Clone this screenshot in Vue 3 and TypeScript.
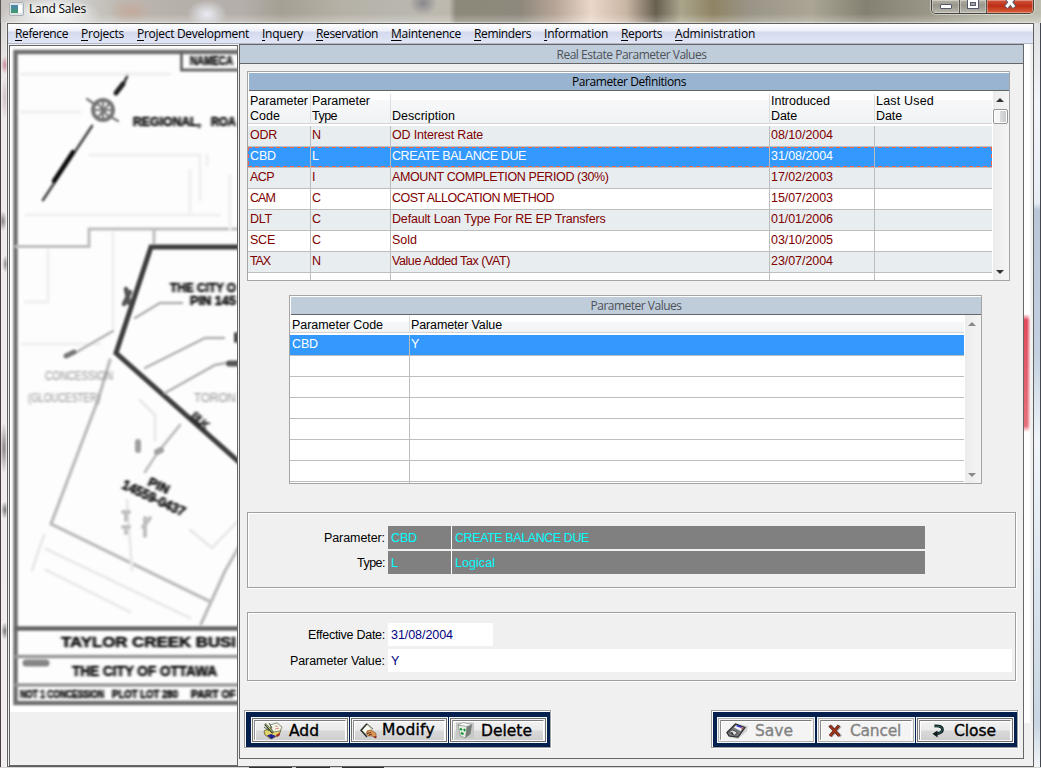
<script setup lang="ts">
interface MenuItem { label: string; width: number }
interface Txt { text: string; width: number }
interface DefRow { cells: (Txt | null)[]; selected?: boolean }
interface ToolButton { label: string; width: number; icon: string; cls: string; disabled?: boolean }

const fit = (el: HTMLElement, width: number) => {
  el.style.letterSpacing = '0px'
  const natural = el.getBoundingClientRect().width
  const n = (el.textContent ?? '').trim().length
  if (n > 0 && width > 0) el.style.letterSpacing = `${(width - natural) / n}px`
}
const vFit = {
  mounted(el: HTMLElement, b: { value: number }) {
    fit(el, b.value)
  },
}

const menu: MenuItem[] = [
  { label: 'Reference', width: 53 },
  { label: 'Projects', width: 43 },
  { label: 'Project Development', width: 112 },
  { label: 'Inquery', width: 41 },
  { label: 'Reservation', width: 62 },
  { label: 'Maintenence', width: 70 },
  { label: 'Reminders', width: 57 },
  { label: 'Information', width: 64 },
  { label: 'Reports', width: 41 },
  { label: 'Administration', width: 80 },
]

const t = (text: string, width: number): Txt => ({ text, width })
const defRows: DefRow[] = [
  { cells: [t('ODR', 27), t('N', 9), t('OD Interest Rate', 91), t('08/10/2004', 62), null] },
  { cells: [t('CBD', 26), t('L', 7), t('CREATE BALANCE DUE', 134), t('31/08/2004', 62), null], selected: true },
  { cells: [t('ACP', 24), t('I', 4), t('AMOUNT COMPLETION PERIOD (30%)', 216.5), t('17/02/2003', 62), null] },
  { cells: [t('CAM', 25), t('C', 9), t('COST ALLOCATION METHOD', 162), t('15/07/2003', 62), null] },
  { cells: [t('DLT', 22), t('C', 9), t('Default Loan Type For RE EP Transfers', 213.5), t('01/01/2006', 62), null] },
  { cells: [t('SCE', 25), t('C', 9), t('Sold', 25), t('03/10/2005', 62), null] },
  { cells: [t('TAX', 20), t('N', 9), t('Value Added Tax (VAT)', 118), t('23/07/2004', 62), null] },
  { cells: [null, null, null, null, null] },
]

const leftTools: ToolButton[] = [
  { label: 'Add', width: 30, icon: 'add', cls: 'b-add' },
  { label: 'Modify', width: 53, icon: 'modify', cls: 'b-modify' },
  { label: 'Delete', width: 51, icon: 'delete', cls: 'b-delete' },
]
const rightTools: ToolButton[] = [
  { label: 'Save', width: 38, icon: 'save', cls: 'b-save', disabled: true },
  { label: 'Cancel', width: 51, icon: 'cancel', cls: 'b-cancel', disabled: true },
  { label: 'Close', width: 42, icon: 'close', cls: 'b-close' },
]
const toolbars = [
  { side: 'left', items: leftTools },
  { side: 'right', items: rightTools },
]
</script>

<template>
  <div class="frame">
    <header class="titlebar">
      <svg class="app-icon" width="15" height="14" viewBox="0 0 15 14">
        <defs>
          <linearGradient id="ai" x1="0" y1="0" x2="0" y2="1">
            <stop offset="0" stop-color="#4a86b0" /><stop offset="1" stop-color="#3f9a6a" />
          </linearGradient>
        </defs>
        <rect x="0.5" y="0.5" width="14" height="13" rx="1" fill="#dfe3e6" stroke="#a9afb3" />
        <rect x="2" y="3" width="7" height="8" fill="url(#ai)" />
        <rect x="9" y="3" width="4" height="8" fill="#fff" />
      </svg>
      <span v-fit="57" class="app-title">Land Sales</span>
      <div class="winbtns">
        <span class="wb min"><svg width="14" height="6"><rect x="1.5" y="0.5" width="11" height="4" rx="0.5" fill="#fff" stroke="#555a6e" /></svg></span>
        <span class="wb max"><svg width="12" height="10"><rect x="0.5" y="-3" width="11" height="11.5" fill="#fff" stroke="#555a6e" /><rect x="3.5" y="2.5" width="5" height="3" fill="#a5a5a0" stroke="#555a6e" /></svg></span>
        <span class="wb cls"><svg width="13" height="10" viewBox="0 0 13 10"><path d="M2 -3 L10.500 7.500 M10.500 -3 L2 7.500" stroke="#5c5868" stroke-width="5" /><path d="M2.400 -2.500 L10.100 7 M10.100 -2.500 L2.400 7" stroke="#fff" stroke-width="3" /></svg></span>
      </div>
    </header>

    <div class="mid">
      <div class="edge left"></div>
      <div class="client">
        <nav class="menubar">
          <span v-for="m in menu" :key="m.label" v-fit="m.width" class="mi"><u>{{ m.label[0] }}</u>{{ m.label.slice(1) }}</span>
        </nav>
        <main class="mdi">
          <section class="plan">
            <svg width="227" height="719" viewBox="10 46 227 719">
              <defs>
                <filter id="soft" x="-5%" y="-5%" width="110%" height="110%"><feGaussianBlur stdDeviation="1.200" /></filter>
                <filter id="softer" x="-5%" y="-5%" width="110%" height="110%"><feGaussianBlur stdDeviation="1.550 1.250" /></filter>
              </defs>
              <rect x="10" y="46" width="227" height="666" fill="#fff" />
              <rect x="18" y="54" width="222" height="648" fill="#fdfdfd" />
              <g filter="url(#soft)" fill="none" stroke-linecap="round">
                <path d="M245 52 H15.5 V703 H245" stroke="#707070" stroke-width="4.500" />
                <path d="M181.500 52 V70 H245" stroke="#666" stroke-width="2.800" />
                <path d="M128 74 L124 83" stroke="#444" stroke-width="3" />
                <path d="M123 84 L116 93" stroke="#222" stroke-width="5" />
                <path d="M92 126 L43 200" stroke="#555" stroke-width="3" />
                <path d="M73 152 L54 181" stroke="#111" stroke-width="4.500" />
                <circle cx="103" cy="110" r="10" stroke="#777" stroke-width="4" />
                <path d="M93 110 H114 M103 100 V121 M87 99 L96 105 M111 117 L118 121 M98 104 L109 117 M109 104 L98 117" stroke="#777" stroke-width="2.200" />
                <path d="M16 246.500 H89 V229 H240 M154 229 V246" stroke="#bebebe" stroke-width="3" />
                <path d="M240 247 H151 L116 353 L240 463" stroke="#3c3c3c" stroke-width="5" />
                <path d="M48 250 V302 H25 M113 232 V328 M22 344 H100 M90 155 H200 V200 M190 170 V215 M230 175 V229 M207 155 V165 M20 74 H170 M20 112 H80 M26 215 H220" stroke="#f0f0f0" stroke-width="3" />
                <path d="M135 318 L160 303 H182 M75 353 L113 331 M145 368 L205 338 H224 M165 393 L215 365 L226 363" stroke="#b0b0b0" stroke-width="2.500" />
                <path d="M66 356 L74 352" stroke="#777" stroke-width="5" />
                <path d="M130 292 L124 304 M126 289 L129 303" stroke="#555" stroke-width="4.500" />
                <path d="M110 360 L98 400 L51 524 L211 602 L201 624 M240 545 L225 571 L211 602" stroke="#bdbdbd" stroke-width="3.300" />
                <path d="M180 425 L158 452 L145 472" stroke="#c0c0c0" stroke-width="2.800" />
                <path d="M44 535 L32 570 M46 549 L190 618 M46 570 L130 612 M140 400 L155 415 V440 M190 530 L212 548 L237 522 M127 500 L132 570" stroke="#e9e9e9" stroke-width="3" />
                <path d="M16 628.500 H240" stroke="#646464" stroke-width="4.500" />
                <path d="M16 656.500 H240 M16 685 H240" stroke="#999" stroke-width="3.500" />
                <path d="M26 663 H46" stroke="#858585" stroke-width="7" />
                <path d="M157 452 L161 450 M138 442 V450" stroke="#a0a0a0" stroke-width="6" />
                <path d="M123 512 L129 512 M126 512 V520 M123 527 H129 M145 518 V536 M150 518 L143 527 M126 531 V533" stroke="#c0c0c0" stroke-width="4" />
                <path d="M236 334 V341" stroke="#444" stroke-width="4" />
                <path d="M229 363.500 H240" stroke="#555" stroke-width="6" />
              </g>
              <g class="ink" filter="url(#softer)">
                <text x="190" y="64.500" font-size="13" textLength="43" lengthAdjust="spacingAndGlyphs">NAMECA</text>
                <text x="133" y="126" font-size="13" textLength="68" lengthAdjust="spacingAndGlyphs">REGIONAL,</text>
                <text x="211" y="126" font-size="13" textLength="25" lengthAdjust="spacingAndGlyphs">ROA</text>
                <text x="170" y="292" font-size="13" textLength="66" lengthAdjust="spacingAndGlyphs">THE CITY O</text>
                <text x="190" y="305" font-size="13" textLength="46" lengthAdjust="spacingAndGlyphs">PIN 145</text>
                <g class="pale">
                  <text x="45" y="380" font-size="12" textLength="68" lengthAdjust="spacingAndGlyphs">CONCESSION</text>
                  <text x="28" y="402" font-size="12" textLength="72" lengthAdjust="spacingAndGlyphs">(GLOUCESTER)</text>
                  <text x="194" y="402" font-size="12" textLength="42" lengthAdjust="spacingAndGlyphs">TORON</text>
                </g>
                <text transform="translate(190 417) rotate(42)" font-size="12" textLength="20" opacity=".8">BLK</text>
                <text transform="translate(147 485) rotate(25)" font-size="13" textLength="22">PIN</text>
                <text transform="translate(121 488) rotate(25)" font-size="14" textLength="68" lengthAdjust="spacingAndGlyphs">14559-0437</text>
                <text x="61" y="647" font-size="15.500" textLength="175" lengthAdjust="spacingAndGlyphs">TAYLOR CREEK BUSI</text>
                <text x="72" y="676" font-size="14.500" textLength="145" lengthAdjust="spacingAndGlyphs">THE CITY OF OTTAWA</text>
                <text x="20" y="698" font-size="10" textLength="84" lengthAdjust="spacingAndGlyphs">NOT 1 CONCESSION</text>
                <text x="112" y="698" font-size="10" textLength="66" lengthAdjust="spacingAndGlyphs">PLOT LOT 280</text>
                <text x="191" y="698" font-size="10" textLength="45" lengthAdjust="spacingAndGlyphs">PART OF</text>
              </g>
            </svg>
          </section>

          <section class="dialog">
            <h1 class="dlg-title"><span v-fit="150">Real Estate Parameter Values</span></h1>

            <div class="table defs">
              <div class="caption active"><span v-fit="114">Parameter Definitions</span></div>
              <div class="tbody">
                <div class="rows">
                  <div class="row head">
                    <div class="cell"><span v-fit="58">Parameter</span><br /><span v-fit="30">Code</span></div>
                    <div class="cell"><span v-fit="58">Parameter</span><br /><span v-fit="25">Type</span></div>
                    <div class="cell"><br /><span v-fit="63">Description</span></div>
                    <div class="cell"><span v-fit="59">Introduced</span><br /><span v-fit="26">Date</span></div>
                    <div class="cell"><span v-fit="58">Last Used</span><br /><span v-fit="26">Date</span></div>
                  </div>
                  <div v-for="(r, i) in defRows" :key="i" class="row" :class="{ selected: r.selected, alt: i % 2 === 0 }">
                    <div v-for="(c, j) in r.cells" :key="j" class="cell"><span v-if="c" v-fit="c.width">{{ c.text }}</span></div>
                  </div>
                </div>
                <div class="scroll">
                  <i class="arrow up"></i><i class="thumb"></i><i class="arrow down"></i>
                </div>
              </div>
            </div>

            <div class="table vals">
              <div class="caption"><span v-fit="91">Parameter Values</span></div>
              <div class="tbody">
                <div class="rows">
                  <div class="row head">
                    <div class="cell"><span v-fit="91">Parameter Code</span></div>
                    <div class="cell"><span v-fit="91">Parameter Value</span></div>
                  </div>
                  <div class="row selected">
                    <div class="cell"><span v-fit="26">CBD</span></div>
                    <div class="cell"><span>Y</span></div>
                  </div>
                  <div v-for="n in 7" :key="n" class="row">
                    <div class="cell"></div>
                    <div class="cell"></div>
                  </div>
                </div>
                <div class="scroll idle"><i class="arrow up"></i><i class="arrow down"></i></div>
              </div>
            </div>

            <div class="group info">
              <div class="line">
                <label><span v-fit="61">Parameter:</span></label>
                <div class="ro code"><span v-fit="26">CBD</span></div>
                <div class="ro desc"><span v-fit="134">CREATE BALANCE DUE</span></div>
              </div>
              <div class="line">
                <label><span v-fit="28">Type:</span></label>
                <div class="ro code"><span>L</span></div>
                <div class="ro desc"><span v-fit="40">Logical</span></div>
              </div>
            </div>

            <div class="group edit">
              <div class="line">
                <label><span v-fit="77">Effective Date:</span></label>
                <div class="field date"><span v-fit="62">31/08/2004</span></div>
              </div>
              <div class="line">
                <label><span v-fit="95">Parameter Value:</span></label>
                <div class="field wide"><span>Y</span></div>
              </div>
            </div>

            <div class="bars">
              <div v-for="bar in toolbars" :key="bar.side" class="toolbar" :class="bar.side">
                <button v-for="b in bar.items" :key="b.label" type="button" class="tb" :class="[b.cls, { off: b.disabled }]">
                  <span class="face">
                    <svg v-if="b.icon === 'add'" width="20" height="18" viewBox="0 0 20 18">
                      <path d="M1 9 L9 5 L18 8 L16 13 L8 17 L2 13 Z" fill="#e2d468" stroke="#5f5a28" stroke-width="0.8" />
                      <path d="M7 3 L14 0.8 L19 5 L17 9 L10 10 Z" fill="#f4f6e8" stroke="#6d7462" stroke-width="0.8" />
                      <path d="M4 13.500 L8 12 L13 14 L8.500 17 Z" fill="#202090" />
                      <path d="M13 13 L17 10.500 L16.500 13.500 L14 15 Z" fill="#a52a20" />
                      <path d="M2 2 L10 11" stroke="#2c3a24" stroke-width="2.200" /><path d="M2.500 2 L10 10.500" stroke="#cfdc8c" stroke-width="0.900" />
                      <path d="M6 1 L9 6 M1 5 L6 9" stroke="#48623a" />
                      <path d="M12 4 l3 .5 M12 7 l4 -.8" stroke="#d59080" />
                    </svg>
                    <svg v-else-if="b.icon === 'modify'" width="18" height="16" viewBox="0 0 18 16">
                      <path d="M6.500 1 L15.500 10 L9 13.500 L1.500 7.500 Z" fill="#fdfbef" stroke="#b9b59f" stroke-width="0.800" />
                      <path d="M7 0.800 L1 7.200 L7 14" fill="none" stroke="#26302a" stroke-width="1.500" />
                      <path d="M7 0.800 L13 6" fill="none" stroke="#55584c" stroke-width="0.900" />
                      <path d="M7 8 L11 7 L16 10.500 L16 14.500 L12 13 L8 12.500 L6.500 10.500 Z" fill="#e09a58" stroke="#8a4a20" stroke-width="0.700" />
                      <path d="M7 10.500 L11 9.500 M9 12 L12 11" stroke="#5a2a18" stroke-width="0.900" />
                      <path d="M13 14 L16 15.500 L16.500 13 Z" fill="#8a2018" />
                    </svg>
                    <svg v-else-if="b.icon === 'delete'" width="18" height="17" viewBox="0 0 18 17">
                      <rect x="0" y="0.500" width="18" height="16" fill="#c6c8c6" />
                      <path d="M2 3 L11 4 L9.500 16 L4.500 14 Z" fill="#e4eee4" stroke="#8b948b" stroke-width="0.700" />
                      <path d="M11 4 L16 2.500 L14.500 12 L9.500 16 Z" fill="#777b77" />
                      <path d="M2 3 L7 0.500 L16 2.500 L11 4.500 Z" fill="#f8f8f8" stroke="#888" stroke-width="0.600" />
                      <path d="M4 6.500 l2 1.500 M8 7 l1 2 M5 11 l2.500 1" stroke="#109030" stroke-width="1.900" />
                    </svg>
                    <svg v-else-if="b.icon === 'save'" width="22" height="16" viewBox="0 0 22 16">
                      <path d="M0 10 L9 0 L22 3 L21 8 L12 16 L3 14 Z" fill="#cfd1cf" />
                      <path d="M1 9.500 L9.500 1 L19 4.500 L12 14 L3 13 Z" fill="#77797a" stroke="#2c2e30" stroke-width="1.200" />
                      <path d="M8 4.500 L10.500 2 L17 4.500 L14.500 8 Z" fill="#f0f2fa" />
                      <path d="M10.500 2.500 L15.500 4.300" stroke="#3030c8" stroke-width="1.700" /><path d="M15.500 4.300 L16.500 6" stroke="#d03030" stroke-width="1.200" />
                      <path d="M3.500 9 L6 7 L11 9 L9 12.500 Z" fill="#e6e6e6" stroke="#333" stroke-width="0.700" />
                      <path d="M5.500 9 L7 11.500" stroke="#333" stroke-width="1.400" />
                    </svg>
                    <svg v-else-if="b.icon === 'cancel'" width="15" height="14" viewBox="0 0 15 14">
                      <path d="M3 2 L13 12.500 M12.500 2 L3 12.500" stroke="#b5b5b5" stroke-width="3" />
                      <path d="M1.500 1.500 L11.500 12 M11 1.500 L2 12" stroke="#5e2a20" stroke-width="3.200" />
                      <path d="M2 2 L11.300 11.700 M10.700 2 L2 11.700" stroke="#a83418" stroke-width="1.600" />
                    </svg>
                    <svg v-else width="14" height="14" viewBox="0 0 14 14">
                      <path d="M2.500 2 Q10.500 1.500 10.500 5.500 Q10.500 9 4 10" fill="none" stroke="#101c1c" stroke-width="2.800" />
                      <path d="M2.500 2 Q10.300 1.700 10.300 5.500 Q10.300 8.800 4 10" fill="none" stroke="#2a7272" stroke-width="0.900" />
                      <path d="M0.500 9.800 L5.500 6.500 L5.500 13.500 Z" fill="#101c1c" />
                    </svg>
                    <span v-fit="b.width" class="lbl">{{ b.label }}</span>
                  </span>
                </button>
              </div>
            </div>
          </section>
          <div class="backdrop-strip"></div>
        </main>
      </div>
      <div class="edge right"></div>
    </div>
    <footer class="under"><i class="s1"></i><i class="s2"></i><i class="s3"></i></footer>
  </div>
</template>

<style>
html, body { margin: 0; overflow: hidden; }
</style>

<style scoped>
* { box-sizing: border-box; }
.frame {
  width: 1041px; height: 768px; overflow: hidden; display: flex; flex-direction: column;
  background: #e4e2e2; font-family: "Liberation Sans", Arial, sans-serif; font-size: 12.5px; color: #000;
  white-space: nowrap;
}
.frame span { display: inline-block; }
.titlebar {
  height: 23px; flex: none; display: flex; align-items: flex-start; padding-left: 8px;
  border-left: 1px solid #5a5552;
  background:
    radial-gradient(ellipse 20px 14px at 206px 14px, rgba(240,243,252,.9), transparent),
    radial-gradient(ellipse 14px 12px at 422px 3px, rgba(110,110,122,.65), transparent),
    radial-gradient(ellipse 22px 12px at 130px 11px, rgba(200,165,150,.7), transparent),
    radial-gradient(ellipse 50px 16px at 50px 14px, rgba(250,253,253,.9), transparent),
    linear-gradient(to bottom, transparent 60%, rgba(255,255,255,.3)),
    linear-gradient(to right, #c6c3c0 0, #d6d7d6 60px, #bdb8b0 120px, #b6b0aa 180px, #b4afab 240px, #a5a093 280px, #b5b1a6 340px, #b9b6b0 400px, #bdb9ae 448px, #8c887a 455px, #8e897c 520px, #b8a698 555px, #ead7c9 590px, #c9b6a4 625px, #686050 655px, #a9a58b 680px, #8f8464 712px, #9a9588 750px, #aaa594 810px, #858172 865px, #9a9788 930px, #b9b8a6 1000px, #bdbdb0 1041px);
}
.app-icon { margin-top: 2px; flex: none; }
.app-title { margin: 0 0 0 5px; font: 12px/17px "Open Sans", "Noto Sans", sans-serif; text-shadow: 0 0 5px #fff, 0 0 8px #fff; }
.winbtns { margin-left: auto; margin-right: 7px; display: flex; height: 14px; border: 1px solid #46443e; border-top: 0; border-radius: 0 0 5px 5px; overflow: hidden; box-shadow: 0 0 0 1px rgba(255,255,255,.45); }
.wb { display: flex !important; justify-content: center; height: 13px; border-right: 1px solid #55534d; background: linear-gradient(#b5b2a5, #98958a 40%, #bbb8ae); box-shadow: inset 0 0 0 1px rgba(255,255,255,.35); }
.min { width: 28px; align-items: flex-start; padding-top: 4px; }
.max { width: 27px; }
.cls { width: 46px; border-right: 0; background: linear-gradient(#d0563c, #bb2e16 45%, #d9603a); }
.mid { display: flex; flex: none; height: 744px; }
.edge { flex: none; width: 7px; }
.edge.left {
  border-left: 1px solid #45403f;
  background:
    radial-gradient(ellipse 4px 9px at 4px 42px, #c98c98, transparent),
    radial-gradient(ellipse 4px 22px at 4px 75px, #cdbfc6, transparent),
    radial-gradient(ellipse 4px 10px at 2px 198px, #8a8688, transparent),
    radial-gradient(ellipse 4px 9px at 5px 241px, #8a8688, transparent),
    radial-gradient(ellipse 4px 26px at 3px 425px, #8a8688, transparent),
    radial-gradient(ellipse 4px 9px at 4px 487px, #777, transparent),
    radial-gradient(ellipse 4px 9px at 4px 608px, #777, transparent),
    linear-gradient(#dad8d7, #efeaec 60px, #f2eef0);
}
.edge.right { border-right: 1px solid #44484e; background: linear-gradient(#dedfe0, #f2f5fa 80px, #e8edf4 180px, #b9c6d6 187px, #c3d0df 330px, #f1f5fa 420px, #dbe5ef 560px, #c8d5e2 700px, #f2f5f8); }
.client { flex: none; width: 1027px; height: 744px; border: 1px solid #5f5f5f; box-shadow: 0 0 0 1px rgba(255,255,255,.4); background: #f0f0f0; }
.menubar { height: 20px; display: flex; gap: 13px; padding-left: 7px; background: linear-gradient(#fff 0, #eef0f9 7px, #d4daee 8px, #e1e6f6 19px); border-bottom: 1px solid #b5b7c6; font: 12px/20px "Open Sans", "Noto Sans", sans-serif; }
.mi { flex: none; }
.mi u { text-underline-offset: 2px; text-decoration-thickness: 1px; }
.mdi { height: 722px; position: relative; }
.plan { position: absolute; left: 1px; top: 1px; width: 229px; height: 721px; border: 1px solid #666; background: #f0f0f0; }
.plan svg { display: block; }
.ink { font-family: "Liberation Sans", Arial, sans-serif; font-weight: bold; fill: #000; stroke: #000; stroke-width: 0.5px; }
.ink .pale { fill: #909090; stroke: none; font-weight: normal; }
.backdrop-strip { position: absolute; left: 1016px; top: 0; width: 6px; height: 679px; background: linear-gradient(to right, transparent 50%, rgba(255,255,255,.75)), linear-gradient(#fff 270px, #e04a5c 276px, #e6707c 382px, #fff 388px); }
.dialog { position: absolute; left: 231px; top: 0; width: 785px; height: 715px; border: 1px solid #666; background: #f0f0f0; }
.dlg-title { margin: 0; height: 19px; background: #bfccda; border-bottom: 1px solid #666; text-align: center; font: 12px/19px "Open Sans", "Noto Sans", sans-serif; color: #4d5258; }
.table { border: 1px solid #a5a5a5; background: #fff; overflow: hidden; }
.defs { margin: 7px 0 0 7px; width: 763px; height: 210px; }
.vals { margin: 14px 0 0 49px; width: 693px; height: 189px; }
.caption { height: 19px; border: solid #fff; border-width: 1px 0 0 1px; background: #bfccda; text-align: center; font: 12px/17px "Open Sans", "Noto Sans", sans-serif; color: #4d5258; box-shadow: inset 0 -1px #666; }
.caption.active { background: #99b4d1; color: #000; }
.tbody { display: flex; }
.rows { flex: none; }
.row { display: grid; height: 21px; border-bottom: 1px solid #bdbdbd; line-height: 18px; color: #800000; }
.defs .row { grid-template-columns: 63px 80px 379px 105px 117px; }
.vals .row { grid-template-columns: 120px 554px; }
.cell { padding-left: 1px; border-right: 1px solid #bdbdbd; overflow: hidden; }
.cell:first-child { padding-left: 2px; }
.cell:last-child { border-right: 0; }
.row.alt { background: #e8edf0; }
.row.selected { background: #3399ff; color: #fff; }
.defs .row.selected {
  background:
    repeating-linear-gradient(to right, #f4664f 0 4px, transparent 4px 7px) 0 0 / 100% 1px no-repeat,
    repeating-linear-gradient(to right, #f4664f 0 4px, transparent 4px 7px) 0 100% / 100% 1px no-repeat,
    repeating-linear-gradient(to bottom, #f4664f 0 4px, transparent 4px 7px) 0 0 / 1px 100% no-repeat,
    repeating-linear-gradient(to bottom, #f4664f 0 4px, transparent 4px 7px) 100% 0 / 1px 100% no-repeat,
    #3399ff;
  background-origin: padding-box;
}
.row.head { color: #000; border-bottom: 2px solid #fff; box-shadow: inset 0 -1px #d5d5d5; background: linear-gradient(#fff 0 9px, #f7f8fa 9px, #f1f2f4); }
.row.head .cell { border-right-color: #dedfe1; }
.defs .row.head { height: 35px; line-height: 15px; padding-top: 3px; }
.vals .row.head { height: 20px; line-height: 20px; background: linear-gradient(#fff 0 7px, #f7f8fa 7px, #f1f2f4); }
.scroll { width: 17px; padding-right: 1px; flex: none; display: flex; flex-direction: column; align-items: center; background: linear-gradient(to right, #fff 0 1px, #ececec 1px, #f4f4f4); }
.defs .scroll { height: 189px; }
.vals .scroll { height: 168px; }
.arrow { border: 4px solid transparent; width: 0; height: 0; }
.arrow.up { border-bottom-color: #333; border-top: 0; margin-top: 7px; }
.arrow.down { border-top-color: #333; border-bottom: 0; margin-top: auto; margin-bottom: 6px; }
.idle .arrow.up { border-bottom-color: #888; }
.idle .arrow.down { border-top-color: #888; }
.thumb { flex: none; width: 15px; height: 15px; margin: 7px 0 0 1px; border: 1px solid #969696; border-radius: 2px; background: linear-gradient(to right, #f5f5f5 45%, #d9dadc 50%, #c6c8cc); box-shadow: inset 0 0 0 1px #fff; }
.group { margin-left: 7px; width: 769px; border: 1px solid #a0a0a0; box-shadow: inset 1px 1px #fff, 1px 1px #fff; }
.info { margin-top: 28px; height: 76px; padding-top: 13px; display: flex; flex-direction: column; gap: 2px; }
.edit { margin-top: 24px; height: 69px; padding-top: 10px; display: flex; flex-direction: column; gap: 3px; }
.line { display: flex; height: 23px; line-height: 24px; }
label { width: 140px; padding-right: 3px; text-align: right; flex: none; }
.ro { background: #808080; color: #00ffff; padding-left: 3px; }
.code { width: 63px; margin-right: 1px; box-shadow: 1px 0 #fff; }
.desc { width: 473px; }
.field { background: #fff; color: #000080; padding-left: 3px; }
.date { width: 105px; }
.wide { width: 624px; }
.bars { margin-top: 29px; padding-left: 4px; display: flex; }
.toolbar { width: 307px; height: 38px; display: flex; gap: 1px; padding: 6px 0 0 6px; background: #05204f; border: 1px solid #a0a0a0; box-shadow: inset 1px 1px #fff, 1px 1px #fff; }
.toolbar.right { margin-left: 160px; padding-left: 5px; gap: 2px; }
.tb { flex: none; width: 98px; height: 26px; padding: 2px; margin: 0; border: 1px solid #f4f6f8; background: #f4f4f4; font: 15.500px "DejaVu Sans", sans-serif; color: #000; box-shadow: inset 0 0 0 1px #707070; }
.tb .face { display: flex; align-items: center; width: 92px; height: 20px; border-top: 1px solid #7b7b7b; border-left: 1px solid #8b8b8b; border-right: 1px solid #fff; border-radius: 1px; background: linear-gradient(#f2f2f2 0, #eaeaea 9px, #d9d9d9 10px, #cfcfcf); box-shadow: inset 1px 1px #fff; }
.tb.off { color: #838383; box-shadow: inset 0 0 0 1px #adb2b5; }
.tb.off .face { background: #f4f4f4; }
.tb svg { flex: none; }
.lbl { line-height: 18px; -webkit-text-stroke: 0.35px currentColor; }
.b-add svg { margin-left: 8px; } .b-add .lbl { margin-left: 6px; }
.b-modify svg { margin-left: 6px; } .b-modify .lbl { margin-left: 4px; margin-top: -2px; }
.b-delete svg { margin-left: 3px; } .b-delete .lbl { margin-left: 7px; }
.b-save svg { margin-left: 5px; } .b-save .lbl { margin-left: 7px; }
.b-cancel svg { margin-left: 7px; } .b-cancel .lbl { margin-left: 7px; }
.b-close { margin-left: -1px; } .b-close svg { margin-left: 12px; } .b-close .lbl { margin-left: 8px; }
.under { flex: none; height: 1px; display: flex; padding-left: 249px; background: #d5d5d5; }
.under i { height: 1px; background: #33302f; margin-right: 4px; }
.s1 { width: 43px; } .s2 { width: 34px; margin-right: 12px !important; } .s3 { width: 42px; }
</style>
